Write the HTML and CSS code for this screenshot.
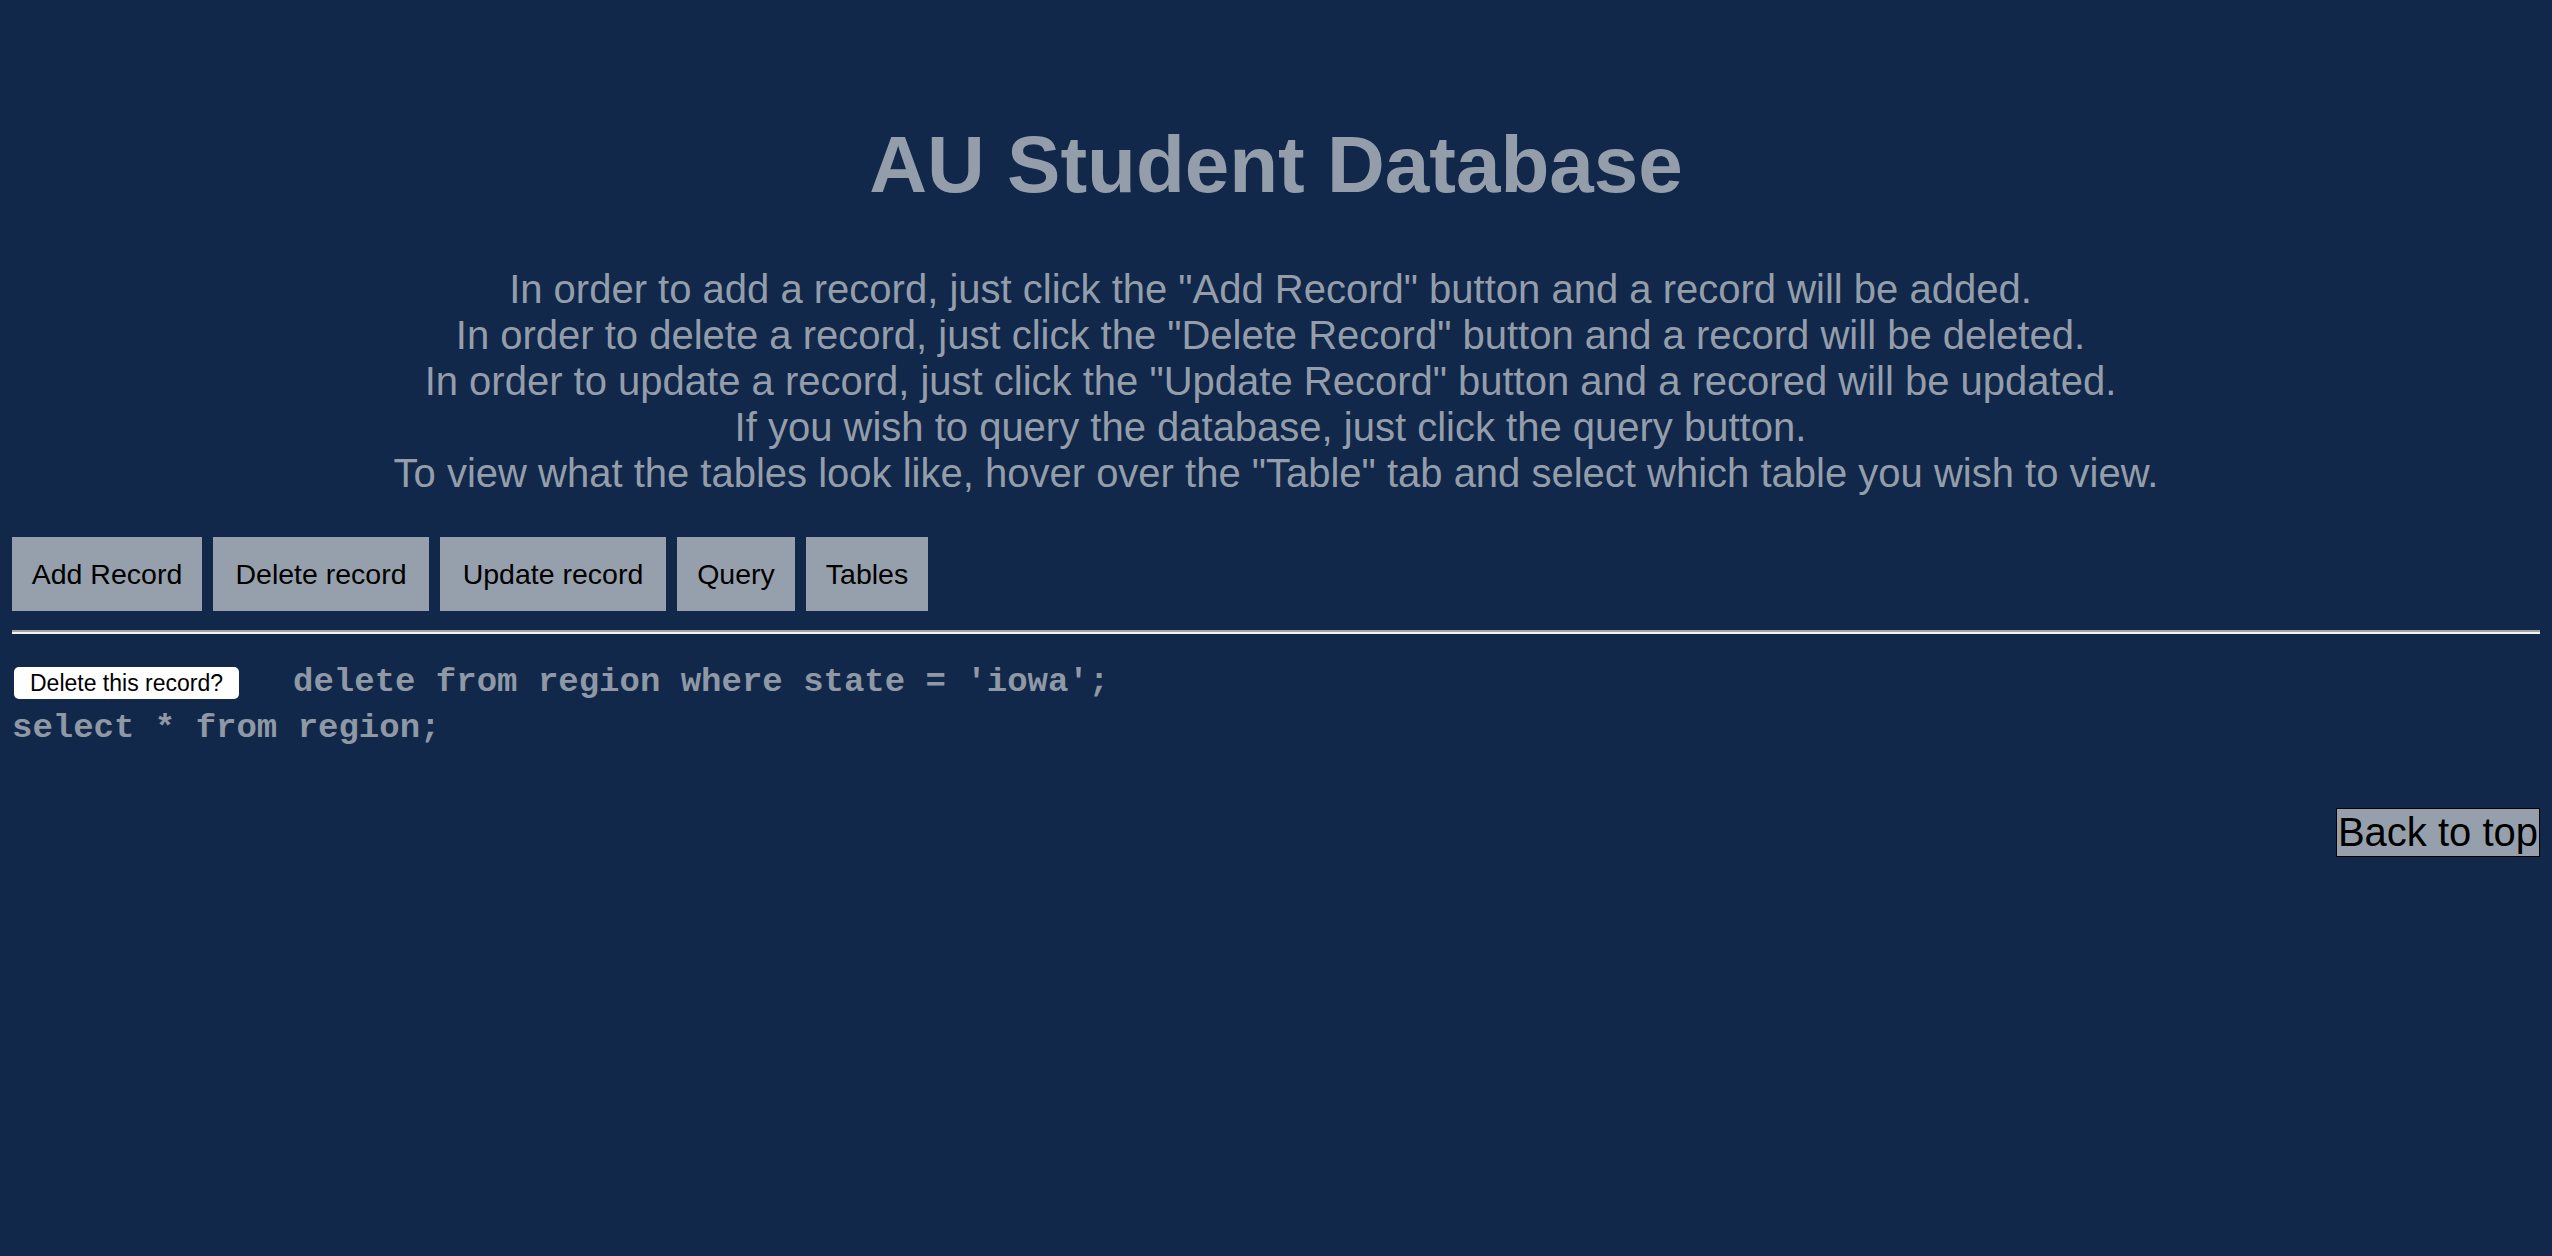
FILE: index.html
```html
<!DOCTYPE html>
<html lang="en">
<head>
<meta charset="utf-8">
<title>AU Student Database</title>
<link rel="stylesheet" href="styles.css">
</head>
<body>
<header class="intro">
  <h1 class="title">AU Student Database</h1>
  <p class="help">In order to add a record, just click the "Add Record" button and a record will be added.&nbsp;<br>In order to delete a record, just click the "Delete Record" button and a record will be deleted.&nbsp;<br>In order to update a record, just click the "Update Record" button and a recored will be updated.&nbsp;<br>If you wish to query the database, just click the query button.&nbsp;<br>To view what the tables look like, hover over the "Table" tab and select which table you wish to view.</p>
</header>
<nav class="toolbar">
  <button class="tool tool-add">Add Record</button>
  <button class="tool tool-delete">Delete record</button>
  <button class="tool tool-update">Update record</button>
  <button class="tool tool-query">Query</button>
  <button class="tool tool-tables">Tables</button>
</nav>
<hr class="rule">
<section class="sql">
  <div class="sql-line"><button class="confirm">Delete this record?</button><span class="code">delete from region where state = 'iowa';</span></div>
  <div class="sql-line"><span class="code">select * from region;</span></div>
</section>
<div class="back-row"><a class="back" href="#">Back to top</a></div>
</body>
</html>
```
FILE: styles.css
```css
html, body {
  background: #12284a;
}
body {
  margin: 0;
  padding: 0 12px;
  font-family: "Liberation Sans", Arial, sans-serif;
  color: #949eab;
  min-height: 1256px;
  box-sizing: border-box;
}
.intro {
  text-align: center;
  padding-top: 119px;
}
.title {
  margin: 0;
  font-size: 80px;
  line-height: 92px;
  font-weight: bold;
  color: #949eab;
}
.help {
  margin: 55px 0 0;
  font-size: 40px;
  line-height: 46px;
}
.toolbar {
  display: flex;
  gap: 11px;
  margin-top: 41px;
}
.tool {
  height: 74px;
  padding: 0;
  margin: 0;
  border: none;
  border-radius: 0;
  background: #96a0ac;
  color: #000;
  font-family: "Liberation Sans", Arial, sans-serif;
  font-size: 28.5px;
  line-height: 74px;
  text-align: center;
}
.tool-add { width: 190px; }
.tool-delete { width: 216px; }
.tool-update { width: 226px; }
.tool-query { width: 118px; }
.tool-tables { width: 122px; }
.rule {
  margin: 19px 0 0;
  height: 0;
  border: none;
  border-top: 2px solid #a3a3a3;
  border-bottom: 2px solid #f2f2f2;
}
.sql {
  margin-top: 25px;
}
.sql-line {
  font-family: "Liberation Mono", "Courier New", monospace;
  font-size: 34px;
  line-height: 46px;
  white-space: pre;
}
.confirm {
  display: inline-block;
  margin: 0 54px 0 2px;
  padding: 2px 16px;
  height: 32px;
  border: none;
  border-radius: 5px;
  background: #fff;
  color: #000;
  font-family: "Liberation Sans", Arial, sans-serif;
  font-size: 23px;
  line-height: 28px;
  vertical-align: baseline;
}
.code {
  font-weight: bold;
  color: #8f98a5;
}
.back-row {
  display: flex;
  justify-content: flex-end;
  margin-top: 57px;
}
.back {
  display: block;
  border: 1px solid #000;
  background: #96a0ac;
  color: #000;
  text-decoration: none;
  font-size: 40px;
  line-height: 47px;
  padding: 0 1px;
}
```
